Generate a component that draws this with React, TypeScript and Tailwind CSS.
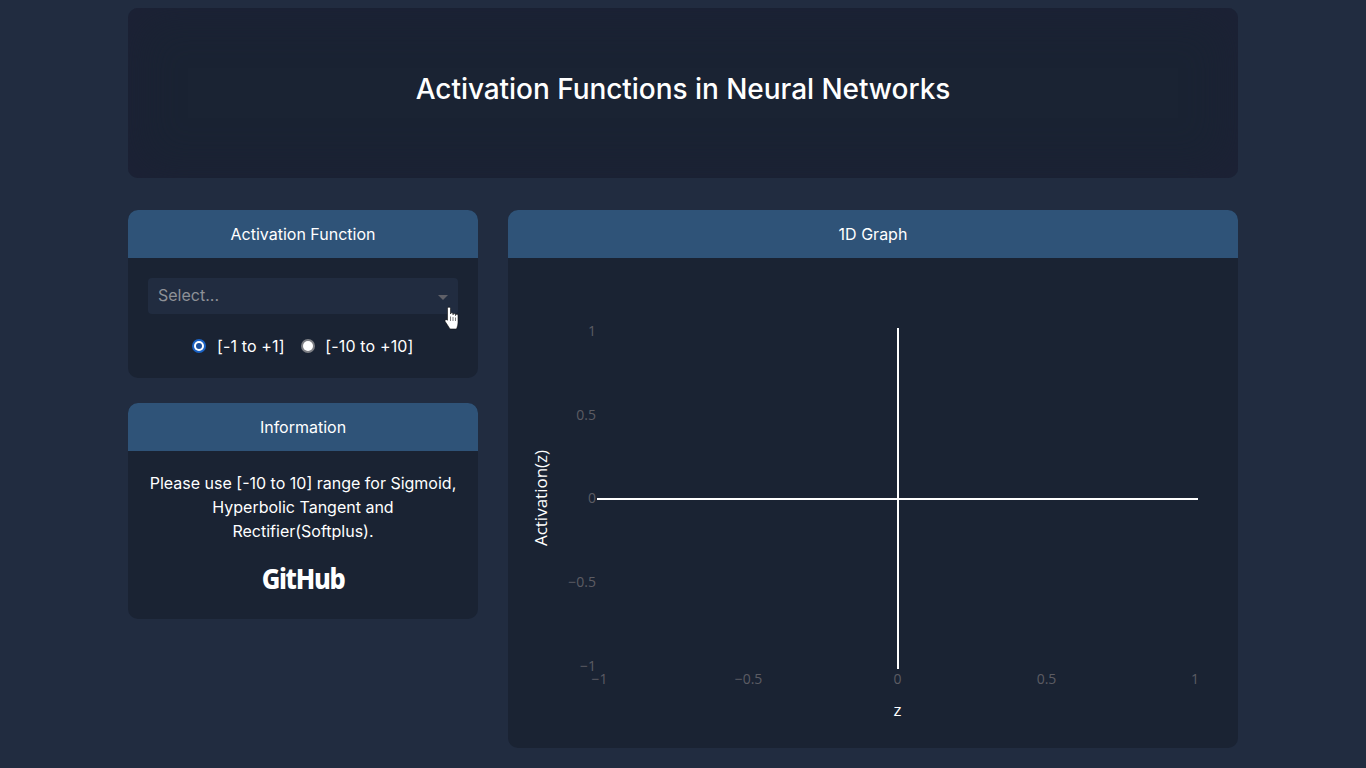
const sans = "font-['Inter','Liberation_Sans',sans-serif]";

const yTicks = [
  { label: "1", y: 73 },
  { label: "0.5", y: 157 },
  { label: "0", y: 240 },
  { label: "−0.5", y: 324 },
  { label: "−1", y: 408 },
];

const xTicks = [
  { label: "−1", x: 91.5 },
  { label: "−0.5", x: 240.5 },
  { label: "0", x: 389.5 },
  { label: "0.5", x: 538.5 },
  { label: "1", x: 687 },
];

function Card({ title, className, children }: { title: string; className?: string; children: React.ReactNode }) {
  return (
    <section className={`rounded-[10px] overflow-hidden bg-[#1a2333] ${className ?? ""}`}>
      <h2 className="h-12 flex items-center justify-center bg-[#2f5378] text-white text-base font-normal">{title}</h2>
      {children}
    </section>
  );
}

function Radio({ checked, label }: { checked?: boolean; label: string }) {
  return (
    <label className="flex items-center gap-[10.5px]">
      <span
        className={`w-[14px] h-[14px] rounded-full flex items-center justify-center ${
          checked ? "bg-[#1a62c4]" : "bg-[#7d7f85]"
        }`}
      >
        <span className="w-[10px] h-[10px] rounded-full bg-white flex items-center justify-center">
          {checked && <span className="w-[6px] h-[6px] rounded-full bg-[#1a4f9c]" />}
        </span>
      </span>
      <span className="text-white text-base tracking-[0.15px]">{label}</span>
    </label>
  );
}

function HandCursor() {
  return (
    <svg className="absolute left-[316px] top-[48px]" width="16" height="24" viewBox="0 0 16 24">
      <path
        d="M3.500 2.500a1.500 1.500 0 0 1 3 0V8a1.250 1.250 0 0 1 2.500 0v.8a1.250 1.250 0 0 1 2.500 0v.8a1.250 1.250 0 0 1 2.500 0V16c0 3-.6 4.500-1.500 7H6l-4.800-7.500c-.8-1.300.8-2.600 2.300-1.300z"
        fill="#fff"
        stroke="#111"
        strokeWidth=".6"
        strokeLinejoin="round"
      />
      <path d="M6.500 10.500v4.500M9 11v4M11.500 11.500v3.500" stroke="#444" strokeWidth=".7" fill="none" />
    </svg>
  );
}

function Graph() {
  return (
    <svg className="block" width="730" height="490" viewBox="0 0 730 490" fontFamily="'Open Sans', sans-serif">
      {yTicks.map((t) => (
        <text key={t.label} x="88" y={t.y + 5} textAnchor="end" fontSize="14" fill="#5c5c63">
          {t.label}
        </text>
      ))}
      {xTicks.map((t) => (
        <text key={t.label} x={t.x} y="426" textAnchor="middle" fontSize="14" fill="#5c5c63">
          {t.label}
        </text>
      ))}
      <line x1="89" y1="241" x2="690" y2="241" stroke="#fff" strokeWidth="2" />
      <line x1="390" y1="70" x2="390" y2="411" stroke="#fff" strokeWidth="2" />
      <text x="389.500" y="458" textAnchor="middle" fontSize="17" fill="#fff">
        z
      </text>
      <text transform="translate(39 240) rotate(-90)" textAnchor="middle" fontSize="17" fill="#fff">
        Activation(z)
      </text>
    </svg>
  );
}

export default function App() {
  return (
    <div className={`min-h-screen bg-[#212c40] ${sans}`}>
      <div className="w-[1110px] mx-auto pt-2 pb-5">
        <header className="h-[170px] rounded-[10px] bg-[#1a2333] shadow-[inset_0_0_50px_#1d2136] flex items-center justify-center pb-[8px]">
          <h1 className="text-white text-[28px] font-medium tracking-[-0.05px]">Activation Functions in Neural Networks</h1>
        </header>

        <main className="flex gap-[30px] mt-8 items-start">
          <div className="w-[350px] flex flex-col gap-[25px]">
            <Card title="Activation Function">
              <div className="relative px-5 pt-5 pb-5">
                <div className="h-9 rounded bg-[#212c40] flex items-center justify-between pl-[10px] pr-[10px]">
                  <span className="text-base text-[#8e9197] mt-[-2px]">Select...</span>
                  <span className="mt-[3px] border-x-[5px] border-t-[5px] border-x-transparent border-t-[#5f6068]" />
                </div>
                <div className="flex justify-center gap-[16px] mt-[20px] h-6 items-center">
                  <Radio checked label="[-1 to +1]" />
                  <Radio label="[-10 to +10]" />
                </div>
                <HandCursor />
              </div>
            </Card>

            <Card title="Information">
              <div className="px-5 pt-5 pb-[24px] text-center text-white text-base leading-6">
                <p>
                  Please use [-10 to 10] range for Sigmoid,
                  <br />
                  Hyperbolic Tangent and
                  <br />
                  Rectifier(Softplus).
                </p>
                <a className="block mt-[20px] h-[32px] leading-[29px] text-[29px] font-['Noto_Sans',sans-serif] font-extrabold tracking-[-1.5px] scale-x-[.88]">
                  GitHub
                </a>
              </div>
            </Card>
          </div>

          <Card title="1D Graph" className="w-[730px]">
            <Graph />
          </Card>
        </main>
      </div>
    </div>
  );
}
